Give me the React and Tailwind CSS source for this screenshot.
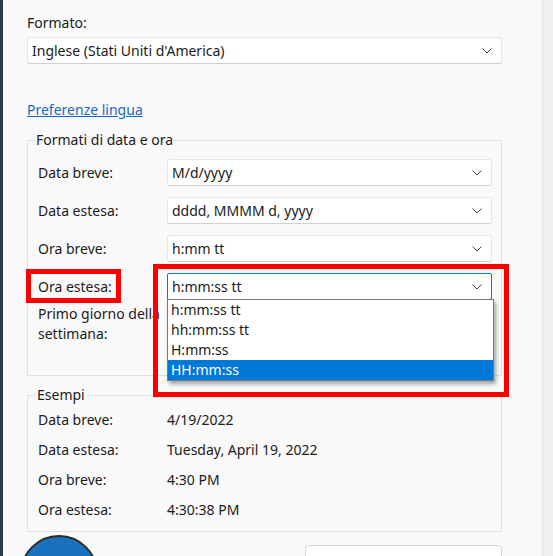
import React from 'react'

function Chevron() {
  return (
    <svg width="10" height="6" viewBox="0 0 10 6" className="shrink-0">
      <polyline points="0.5,0.5 5,5 9.5,0.5" fill="none" stroke="#444" strokeWidth="1" />
    </svg>
  )
}

function Select({ value, focused }) {
  return (
    <div
      className={
        focused
          ? 'flex h-[27px] flex-1 items-center justify-between rounded-[2px] border border-[#0078d7] bg-white pl-[4px] pr-[9px]'
          : 'flex h-[27px] flex-1 items-center justify-between rounded-[3px] border border-[#e6e6e6] border-b-[#d0d0d0] bg-white pl-[4px] pr-[9px]'
      }
    >
      <span className="leading-[20px]">{value}</span>
      <Chevron />
    </div>
  )
}

function Row({ label, value, focused, className }) {
  return (
    <div className={'flex items-center ' + (className || '')}>
      <span className="w-[129px] shrink-0 leading-[20px]">{label}</span>
      <Select value={value} focused={focused} />
    </div>
  )
}

const examples = [
  ['Data breve:', '4/19/2022'],
  ['Data estesa:', 'Tuesday, April 19, 2022'],
  ['Ora breve:', '4:30 PM'],
  ['Ora estesa:', '4:30:38 PM'],
]

const options = ['h:mm:ss tt', 'hh:mm:ss tt', 'H:mm:ss', 'HH:mm:ss']

export default function App() {
  return (
    <div className="relative flex h-[556px] w-[553px] overflow-hidden bg-[#f9f9f9] font-['Noto_Sans',sans-serif] text-[14px] text-[#1b1b1b]">
      <div className="w-[3px] shrink-0 bg-[#2c3a4b]" />

      <div className="flex-1 pl-[24px] pr-[40px] pt-[13px]">
        <div className="leading-[20px]">Formato:</div>
        <div className="mt-[4px] flex">
          <Select value="Inglese (Stati Uniti d'America)" />
        </div>

        <a className="mt-[36px] block w-max leading-[20px] text-[#1769c2] underline">Preferenze lingua</a>

        <fieldset className="mt-[10px] border border-[#e0e0e0] px-[10px] pb-[31px] pr-[9px]">
          <legend className="ml-[-4px] px-[2px] leading-[20px]">Formati di data e ora</legend>
          <Row className="mt-[9px]" label="Data breve:" value="M/d/yyyy" />
          <Row className="mt-[11px]" label="Data estesa:" value="dddd, MMMM d, yyyy" />
          <Row className="mt-[11px]" label="Ora breve:" value="h:mm tt" />
          <Row className="mt-[11px]" label="Ora estesa:" value="h:mm:ss tt" focused />
          <div className="mt-[4px] flex items-start">
            <span className="w-[129px] shrink-0 leading-[20px]">
              Primo giorno della
              <br />
              settimana:
            </span>
            <Select value="" />
          </div>
        </fieldset>

        <fieldset className="mt-[9px] border border-[#e0e0e0] px-[10px] pb-[6px]">
          <legend className="ml-[-3px] px-[2px] leading-[20px]">Esempi</legend>
          {examples.map(([k, v]) => (
            <div key={k} className="flex leading-[30px]">
              <span className="w-[129px] shrink-0">{k}</span>
              <span>{v}</span>
            </div>
          ))}
        </fieldset>

        <div className="mt-[3px] flex items-start">
          <div className="ml-[-7px] h-[78px] w-[78px] shrink-0 rounded-full border-2 border-[#2b2b2b] bg-[#1a72bf]" />
          <div className="ml-auto mt-[10px] flex h-[32px] w-[197px] justify-center rounded-[4px] border border-[#d5d5d5] bg-white pt-[6px] leading-[20px]">
            Impostazioni aggiuntive...
          </div>
        </div>
      </div>

      <div className="w-[11px] shrink-0 border-l border-[#e3e3e3] bg-[#f0f0f0]" />

      {/* open dropdown list */}
      <div className="absolute left-[167px] top-[299px] w-[327px] border border-[#7a7a7a] bg-white shadow-[2px_3px_4px_rgba(0,0,0,0.35)]">
        {options.map((o, i) => (
          <div
            key={o}
            className={
              i === 3
                ? 'h-[20px] bg-[#0078d7] pl-[3px] leading-[20px] text-white'
                : 'h-[20px] pl-[3px] leading-[20px]'
            }
          >
            {o}
          </div>
        ))}
      </div>

      {/* annotation boxes */}
      <div className="absolute left-[26px] top-[269px] h-[34px] w-[95px] border-[5px] border-[#ff0000]" />
      <div className="absolute left-[153px] top-[264px] h-[133px] w-[356px] border-[5px] border-[#ff0000]" />
    </div>
  )
}
